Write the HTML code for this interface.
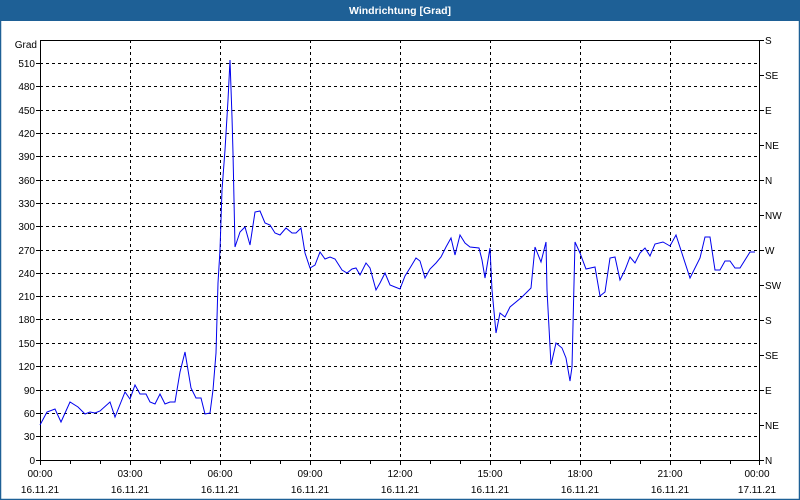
<!DOCTYPE html>
<html><head><meta charset="utf-8"><style>
html,body{margin:0;padding:0;background:#fff;}
body{width:800px;height:500px;overflow:hidden;position:relative;font-family:"Liberation Sans",Tahoma,sans-serif;}
</style></head><body>
<svg width="800" height="500" xmlns="http://www.w3.org/2000/svg" style="position:absolute;left:0;top:0" font-family="Liberation Sans, sans-serif" font-size="10">
<rect x="0" y="0" width="800" height="500" fill="#fff"/>
<rect x="0" y="0" width="800" height="21" fill="#1e6096"/>
<rect x="0.5" y="0.5" width="799" height="499" fill="none" stroke="#1e6096" stroke-width="1.5"/>
<text x="400" y="14" fill="#fff" font-weight="bold" font-size="10.5" text-anchor="middle">Windrichtung [Grad]</text>
<g stroke="#000" stroke-width="1" stroke-dasharray="3,3">
<line x1="40" y1="436.5" x2="760" y2="436.5"/><line x1="40" y1="413.5" x2="760" y2="413.5"/><line x1="40" y1="390.5" x2="760" y2="390.5"/><line x1="40" y1="366.5" x2="760" y2="366.5"/><line x1="40" y1="343.5" x2="760" y2="343.5"/><line x1="40" y1="319.5" x2="760" y2="319.5"/><line x1="40" y1="296.5" x2="760" y2="296.5"/><line x1="40" y1="273.5" x2="760" y2="273.5"/><line x1="40" y1="250.5" x2="760" y2="250.5"/><line x1="40" y1="226.5" x2="760" y2="226.5"/><line x1="40" y1="203.5" x2="760" y2="203.5"/><line x1="40" y1="180.5" x2="760" y2="180.5"/><line x1="40" y1="156.5" x2="760" y2="156.5"/><line x1="40" y1="133.5" x2="760" y2="133.5"/><line x1="40" y1="110.5" x2="760" y2="110.5"/><line x1="40" y1="86.5" x2="760" y2="86.5"/><line x1="40" y1="63.5" x2="760" y2="63.5"/>
<line x1="130.5" y1="40" x2="130.5" y2="460"/><line x1="220.5" y1="40" x2="220.5" y2="460"/><line x1="310.5" y1="40" x2="310.5" y2="460"/><line x1="400.5" y1="40" x2="400.5" y2="460"/><line x1="490.5" y1="40" x2="490.5" y2="460"/><line x1="580.5" y1="40" x2="580.5" y2="460"/><line x1="670.5" y1="40" x2="670.5" y2="460"/>
</g>
<g stroke="#000" stroke-width="1" fill="none">
<rect x="40.5" y="40.5" width="719" height="420"/>
<path d="M40.5 460v5M70.5 460v4M100.5 460v4M130.5 460v5M160.5 460v4M190.5 460v4M220.5 460v5M250.5 460v4M280.5 460v4M310.5 460v5M340.5 460v4M370.5 460v4M400.5 460v5M430.5 460v4M460.5 460v4M490.5 460v5M520.5 460v4M550.5 460v4M580.5 460v5M610.5 460v4M640.5 460v4M670.5 460v5M700.5 460v4M730.5 460v4M759.5 460v5"/>
<path d="M760 40.5h4M760 75.5h4M760 110.5h4M760 145.5h4M760 180.5h4M760 215.5h4M760 250.5h4M760 285.5h4M760 320.5h4M760 355.5h4M760 390.5h4M760 425.5h4M760 460.5h4"/>
<path d="M36 460.5h4M36 436.5h4M36 413.5h4M36 390.5h4M36 366.5h4M36 343.5h4M36 319.5h4M36 296.5h4M36 273.5h4M36 250.5h4M36 226.5h4M36 203.5h4M36 180.5h4M36 156.5h4M36 133.5h4M36 110.5h4M36 86.5h4M36 63.5h4"/>
</g>
<g fill="#000" text-anchor="end">
<text x="37" y="48">Grad</text>
<text x="35" y="464">0</text><text x="35" y="440">30</text><text x="35" y="417">60</text><text x="35" y="394">90</text><text x="35" y="370">120</text><text x="35" y="347">150</text><text x="35" y="323">180</text><text x="35" y="300">210</text><text x="35" y="277">240</text><text x="35" y="254">270</text><text x="35" y="230">300</text><text x="35" y="207">330</text><text x="35" y="184">360</text><text x="35" y="160">390</text><text x="35" y="137">420</text><text x="35" y="114">450</text><text x="35" y="90">480</text><text x="35" y="67">510</text>
</g>
<g fill="#000">
<text x="765" y="44">S</text><text x="765" y="79">SE</text><text x="765" y="114">E</text><text x="765" y="149">NE</text><text x="765" y="184">N</text><text x="765" y="219">NW</text><text x="765" y="254">W</text><text x="765" y="289">SW</text><text x="765" y="324">S</text><text x="765" y="359">SE</text><text x="765" y="394">E</text><text x="765" y="429">NE</text><text x="765" y="464">N</text>
</g>
<g fill="#000" text-anchor="middle">
<text x="40" y="477">00:00</text><text x="130" y="477">03:00</text><text x="220" y="477">06:00</text><text x="310" y="477">09:00</text><text x="400" y="477">12:00</text><text x="490" y="477">15:00</text><text x="580" y="477">18:00</text><text x="670" y="477">21:00</text><text x="757" y="477">00:00</text>
<text x="40" y="493">16.11.21</text><text x="130" y="493">16.11.21</text><text x="220" y="493">16.11.21</text><text x="310" y="493">16.11.21</text><text x="400" y="493">16.11.21</text><text x="490" y="493">16.11.21</text><text x="580" y="493">16.11.21</text><text x="670" y="493">16.11.21</text><text x="757" y="493">17.11.21</text>
</g>
<polyline fill="none" stroke="#0000ee" stroke-width="1" points="40,425 47,412 55,409 61,422 70,402 78,407 85,414 90,412 95,413 100,411 110,402 115,417 125,392 130,399 135,385 140,394 146,394 150,402 155,404 160,394 165,404 170,402 175,402 180,372 185,352 191,388 196,398 201,398 205,414 210,413 213,390 216,353 218,283 220,250 222,190 225,150 228,100 230,60 232,117 233,153 235,247 240,232 245,227 250,245 255,212 260,211 265,223 270,225 275,233 280,235 286,228 292,233 296,233 301,228 305,253 310,268 315,265 320,252 325,259 330,257 335,259 342,270 347,273 352,269 356,268 360,275 366,263 370,268 376,290 380,283 385,273 390,285 395,287 400,289 405,276 410,268 416,258 420,261 425,278 430,269 436,263 441,257 446,247 451,238 455,255 460,235 465,243 470,247 479,248 482,260 485,278 490,248 492,290 496,333 500,313 505,317 510,307 522,297 531,288 535,247 541,262 546,242 547,290 551,365 556,343 562,348 566,358 570,381 572,367 575,242 580,253 586,269 595,267 600,296 605,292 610,258 615,257 620,280 625,270 630,257 635,263 640,253 645,248 650,256 655,244 663,242 670,246 676,235 690,278 700,258 705,237 710,237 715,270 720,270 725,261 730,261 735,268 740,268 750,252 755,252"/>
</svg>
</body></html>
